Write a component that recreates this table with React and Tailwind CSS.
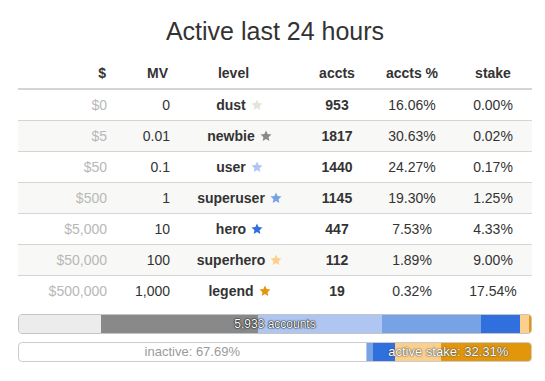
const levels = [
  { usd: '$0', mv: '0', name: 'dust', color: '#e4e4d8', accts: 953, pct: 16.06, stake: 0.0 },
  { usd: '$5', mv: '0.01', name: 'newbie', color: '#898989', accts: 1817, pct: 30.63, stake: 0.02 },
  { usd: '$50', mv: '0.1', name: 'user', color: '#afc6f2', accts: 1440, pct: 24.27, stake: 0.17 },
  { usd: '$500', mv: '1', name: 'superuser', color: '#77a2e6', accts: 1145, pct: 19.3, stake: 1.25 },
  { usd: '$5,000', mv: '10', name: 'hero', color: '#2f6fde', accts: 447, pct: 7.53, stake: 4.33 },
  { usd: '$50,000', mv: '100', name: 'superhero', color: '#fcd08c', accts: 112, pct: 1.89, stake: 9.0 },
  { usd: '$500,000', mv: '1,000', name: 'legend', color: '#e2960c', accts: 19, pct: 0.32, stake: 17.54 },
];

const barColors = ['#ececec', '#898989', '#afc6f2', '#77a2e6', '#2f6fde', '#fcd08c', '#e2960c'];

function Star({ color }) {
  return (
    <svg className="inline-block w-[12px] h-[12px] ml-[5px] align-[-1px]" viewBox="0 0 24 24">
      <polygon
        fill={color}
        points="12,1 15.2,8.2 23,9 17.1,14.3 18.7,22 12,18 5.3,22 6.9,14.3 1,9 8.8,8.2"
      />
    </svg>
  );
}

const cols = 'grid grid-cols-[94px_63px_129px_66px_84px_78px]';

export default function App() {
  const active = levels.reduce((s, l) => s + l.stake, 0);
  const inactive = 100 - active;

  return (
    <div className="w-[545px] h-[381px] bg-white text-[#333] font-['Liberation_Sans',Arial,sans-serif] text-[14px]">
      <div className="ml-[18px] w-[514px] pt-[16px]">
        <h3 className="h-[30px] leading-[30px] text-[25px] text-center">Active last 24 hours</h3>

        <div className={`${cols} mt-[6px] font-bold leading-[20px] border-b-2 border-[#d3d7d3]`}>
          <div className="pt-[11px] pb-[5px] pr-[6px] text-right">$</div>
          <div className="pt-[11px] pb-[5px] pr-[7px] text-right">MV</div>
          <div className="pt-[11px] pb-[5px] pr-[12px] text-center">level</div>
          <div className="pt-[11px] pb-[5px] text-center">accts</div>
          <div className="pt-[11px] pb-[5px] text-center">accts %</div>
          <div className="pt-[11px] pb-[5px] text-center">stake</div>
        </div>

        {levels.map((l, i) => (
          <div
            key={l.name}
            className={`${cols} leading-[20px] ${i > 0 ? 'border-t border-[#d3d7d3]' : ''} ${i % 2 === 1 ? 'bg-[#f8f8f7]' : ''}`}
          >
            <div className="py-[5px] pr-[5px] text-right text-[#b8b8b8]">{l.usd}</div>
            <div className="py-[5px] pr-[5px] text-right">{l.mv}</div>
            <div className="py-[5px] text-center font-bold whitespace-nowrap">
              {l.name}
              <Star color={l.color} />
            </div>
            <div className="py-[5px] text-center font-bold">{l.accts}</div>
            <div className="py-[5px] text-center">{l.pct.toFixed(2)}%</div>
            <div className="py-[5px] text-center">{l.stake.toFixed(2)}%</div>
          </div>
        ))}

        <div className="relative mt-[8px] h-[20px] flex rounded-[4px] overflow-hidden border border-[#c4c4c4]">
          {levels.map((l, i) => (
            <div key={l.name} className="h-full" style={{ width: `${l.pct}%`, background: barColors[i] }} />
          ))}
          <div className="absolute inset-0 flex items-center justify-center text-white text-[12px] leading-[18px] [text-shadow:0_0_1px_#000,0_0_1px_#000,0_0_2px_#333]">
            5,933 accounts
          </div>
        </div>

        <div className="mt-[8px] h-[20px] flex rounded-[4px] overflow-hidden border border-[#cccccc] text-[13px] leading-[18px]">
          <div className="h-full flex items-center justify-center text-[#9a9a9a]" style={{ width: `${inactive}%` }}>
            inactive: {inactive.toFixed(2)}%
          </div>
          <div className="relative h-full flex" style={{ width: `${active}%` }}>
            {levels.map((l, i) => (
              <div key={l.name} className="h-full" style={{ width: `${(l.stake / active) * 100}%`, background: barColors[i] }} />
            ))}
            <div className="absolute inset-0 flex items-center justify-center text-white whitespace-nowrap [text-shadow:0_0_1px_#333,0_0_2px_#555]">
              active stake: {active.toFixed(2)}%
            </div>
          </div>
        </div>
      </div>
    </div>
  );
}
